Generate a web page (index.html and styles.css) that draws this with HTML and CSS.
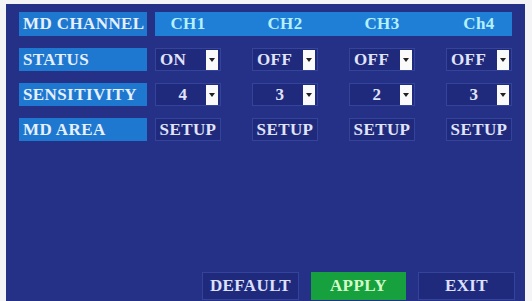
FILE: index.html
```html
<!DOCTYPE html>
<html lang="en">
<head>
  <meta charset="UTF-8" />
  <title>Motion Detection</title>
  <link rel="stylesheet" href="styles.css">
</head>
<body>

  <div class="screen">
    <div class="row">
      <div class="label">MD CHANNEL</div>
      <div class="cells head">
        <span>CH1</span>
        <span>CH2</span>
        <span>CH3</span>
        <span>Ch4</span>
      </div>
    </div>

    <div class="row">
      <div class="label">STATUS</div>
      <div class="cells">
        <div class="select"><span class="val">ON</span><i class="arrow"></i></div>
        <div class="select"><span class="val">OFF</span><i class="arrow"></i></div>
        <div class="select"><span class="val">OFF</span><i class="arrow"></i></div>
        <div class="select"><span class="val">OFF</span><i class="arrow"></i></div>
      </div>
    </div>

    <div class="row">
      <div class="label">SENSITIVITY</div>
      <div class="cells">
        <div class="select num"><span class="val">4</span><i class="arrow"></i></div>
        <div class="select num"><span class="val">3</span><i class="arrow"></i></div>
        <div class="select num"><span class="val">2</span><i class="arrow"></i></div>
        <div class="select num"><span class="val">3</span><i class="arrow"></i></div>
      </div>
    </div>

    <div class="row">
      <div class="label">MD AREA</div>
      <div class="cells">
        <div class="btn">SETUP</div>
        <div class="btn">SETUP</div>
        <div class="btn">SETUP</div>
        <div class="btn">SETUP</div>
      </div>
    </div>

    <div class="actions">
      <div class="action">DEFAULT</div>
      <div class="action apply">APPLY</div>
      <div class="action">EXIT</div>
    </div>
  </div>

</body>
</html>
```

FILE: styles.css
```css
/* DVR on-screen menu */
body {
  margin: 0;
  background: #f4f4f6;
  font-family: 'Liberation Serif', 'Times New Roman', serif;
  font-weight: 700;
  font-size: 17px;
  letter-spacing: 0.4px;
}
.screen {
  margin: 4px 7px 0 6px;
  height: 297px;
  box-sizing: border-box;
  padding: 8px 10px 1px 13px;
  background: #243187;
  display: flex;
  flex-direction: column;
  gap: 12px;
}
.row {
  display: grid;
  grid-template-columns: 128px 357px;
  column-gap: 8px;
  height: 23px;
}
.row:first-child {
  height: 24px;
}
.label {
  background: #1f78cf;
  color: #e6f0ff;
  line-height: 23px;
  padding-left: 4px;
  white-space: nowrap;
}
.cells {
  display: grid;
  grid-template-columns: repeat(4, 66px);
  column-gap: 31px;
}
.cells.head {
  background: #1f7fd6;
  color: #b4f0ff;
  line-height: 24px;
  text-align: center;
}
.select, .btn {
  background: #1f2a7c;
  border: 1px solid #34449a;
  box-sizing: border-box;
  color: #e0e4fa;
  line-height: 21px;
}
.select {
  display: flex;
  align-items: center;
  padding: 0 2px 0 4px;
}
.select .val {
  flex: 1;
}
.select.num .val {
  text-align: center;
}
.arrow {
  width: 12px;
  height: 20px;
  background: #fafafa;
  display: flex;
  align-items: center;
  justify-content: center;
}
.arrow::after {
  content: "";
  border-left: 3px solid transparent;
  border-right: 3px solid transparent;
  border-top: 4px solid #202020;
}
.btn {
  text-align: center;
}
.actions {
  margin-top: auto;
  display: flex;
  justify-content: flex-end;
  gap: 12px;
}
.action {
  width: 97px;
  height: 28px;
  box-sizing: border-box;
  border: 1px solid #34449a;
  background: #1f2a7c;
  color: #dde0ff;
  text-align: center;
  line-height: 26px;
}
.action.apply {
  width: 95px;
  background: #17a13e;
  border-color: #17a13e;
  color: #d4ffc8;
}
```
